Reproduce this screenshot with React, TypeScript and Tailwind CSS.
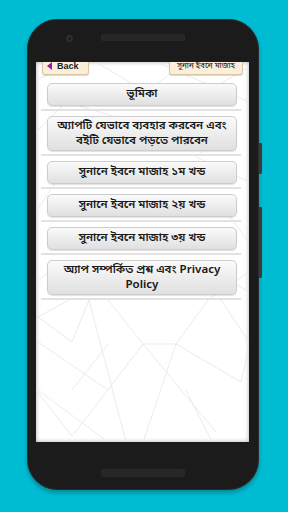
const BN = "font-['Noto_Sans_Bengali','Noto_Sans','Liberation_Sans',sans-serif]";

const ITEMS: { label: string; tall?: boolean }[] = [
  { label: "ভূমিকা" },
  { label: "অ্যাপটি যেভাবে ব্যবহার করবেন এবং বইটি যেভাবে পড়তে পারবেন", tall: true },
  { label: "সুনানে ইবনে মাজাহ ১ম খন্ড" },
  { label: "সুনানে ইবনে মাজাহ ২য় খন্ড" },
  { label: "সুনানে ইবনে মাজাহ ৩য় খন্ড" },
  { label: "অ্যাপ সম্পর্কিত প্রশ্ন এবং Privacy Policy", tall: true },
];

const LINES: string[] = [
  "0,18 40,0",
  "60,0 110,30 150,0",
  "120,0 213,40",
  "170,30 213,5",
  "0,70 30,40 80,55",
  "200,60 160,95 213,120",
  "0,150 20,120",
  "213,180 190,150",
  "0,220 25,200",
  "213,230 180,210",
  "2,255 33,238",
  "2,255 36,280 53,238",
  "2,280 72,328 107,282",
  "0,328 36,374",
  "36,328 72,282",
  "53,238 90,380",
  "72,238 107,282 180,370",
  "107,282 140,282 172,238",
  "107,380 140,282",
  "140,282 205,320 213,285",
  "150,328 176,380",
  "172,238 213,210",
  "36,374 72,328",
  "2,328 72,380",
  "185,238 213,280",
];

function PatternBg() {
  return (
    <svg className="absolute inset-0" width="213" height="380" viewBox="0 0 213 380">
      {LINES.map((p, i) => (
        <polyline key={i} points={p} fill="none" stroke="#e6e6e6" strokeWidth="0.8" />
      ))}
    </svg>
  );
}

function MenuButton({ label, tall }: { label: string; tall?: boolean }) {
  return (
    <div>
      <div
        className={`mx-[6px] flex items-center justify-center rounded-[5px] border border-[#cdcdcd] bg-gradient-to-b from-[#fafafa] to-[#e0e0e0] px-[3px] text-center text-[11.5px] font-semibold text-[#1a1a1a] shadow-[0_1px_1px_rgba(0,0,0,0.12)] ${BN} ${
          tall ? "h-[35px] leading-[15px]" : "h-[23px] leading-[15px]"
        }`}
      >
        {label}
      </div>
      <div className="mt-[3px] mb-[5px] mr-[2px] h-[2px] bg-[#e2e2e2]" />
    </div>
  );
}

export default function App() {
  return (
    <div className="h-[512px] w-[288px] overflow-hidden bg-[#00bcd2] pl-[27px] pt-[19px]">
      <div className="relative flex h-[471px] w-[232px] flex-col rounded-[30px] border border-[#2c2c2c] bg-[#1b1b1b] shadow-[0_3px_4px_rgba(0,0,0,0.25)]">
        {/* side keys */}
        <div className="absolute right-[-4px] top-[123px] h-[31px] w-[3px] rounded-r-[1px] bg-[#3a3a3a]" />
        <div className="absolute right-[-4px] top-[187px] h-[71px] w-[3px] rounded-r-[1px] bg-[#3a3a3a]" />

        <div className="flex h-[42px] items-start pl-[38px] pt-[14px]">
          <div className="mt-[1px] flex h-[7px] w-[7px] items-center justify-center rounded-full bg-[#2e2e2e]">
            <div className="h-[3px] w-[3px] rounded-full bg-[#1c1c1c]" />
          </div>
          <div className="ml-[28px] h-[7px] w-[84px] rounded-full bg-[#262626] shadow-[inset_0_0_1px_rgba(255,255,255,0.15)]" />
        </div>

        <div className="relative ml-[8px] h-[380px] w-[213px] overflow-hidden bg-white shadow-[inset_0_0_4px_rgba(0,0,0,0.35)]">
          <PatternBg />
          <div className="relative">
            <div className="-mt-[7px] flex justify-between px-[6px]">
              <div className="flex h-[20px] w-[47px] items-end gap-[5px] rounded-[3px] border border-[#d8c6a4] bg-[#fbefdc] pb-[2px] pl-[4px] shadow-[0_1px_1px_rgba(0,0,0,0.15)]">
                <div className="mb-[2px] h-0 w-0 border-y-[4px] border-r-[5px] border-y-transparent border-r-[#9a1aa0]" />
                <span className="font-['Liberation_Sans',sans-serif] text-[9px] font-bold leading-[11px] text-[#222]">Back</span>
              </div>
              <div className={`flex h-[20px] w-[74px] items-end justify-center rounded-[3px] border border-[#d8c6a4] bg-[#fbefdc] pb-[2px] text-[8px] leading-[11px] text-[#111] shadow-[0_1px_1px_rgba(0,0,0,0.15)] ${BN}`}>
                সুনান ইবনে মাজাহ
              </div>
            </div>
            <div className="mt-[8px] pl-[5px] pr-[6px]">
              {ITEMS.map((it) => (
                <MenuButton key={it.label} label={it.label} tall={it.tall} />
              ))}
            </div>
          </div>
        </div>

        <div className="flex flex-1 justify-center pt-[27px]">
          <div className="h-[8px] w-[84px] rounded-full bg-[#262626] shadow-[inset_0_0_1px_rgba(255,255,255,0.15)]" />
        </div>
      </div>
    </div>
  );
}
